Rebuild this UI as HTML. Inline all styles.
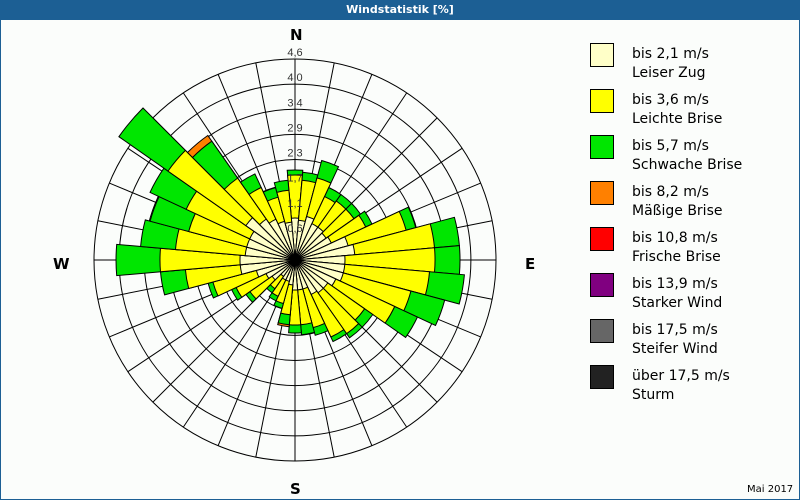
<!DOCTYPE html>
<html><head><meta charset="utf-8"><style>
html,body{margin:0;padding:0}
body{width:800px;height:500px;overflow:hidden;background:#fbfdfb;font-family:"DejaVu Sans","Liberation Sans",sans-serif;position:relative}
#frame{position:absolute;left:0;top:0;width:798px;height:498px;border:1px solid #1c5f94}
#title{position:absolute;left:0;top:0;width:800px;height:20px;background:#1c5f94;color:#fff;font-size:11px;font-weight:bold;text-align:center;line-height:20px}
.lg{position:absolute;left:590px;width:22px;height:22px;border:1px solid #000}
.lt{position:absolute;left:632px;font-size:14px;line-height:19px;color:#000}
.cmp{position:absolute;font-size:15px;font-weight:bold;color:#000}
</style></head><body>
<div id="frame"></div>
<div id="title">Windstatistik [%]</div>
<svg id="s" width="800" height="500" style="position:absolute;left:0;top:0"></svg>
<div class="cmp" style="left:290px;top:26px">N</div>
<div class="cmp" style="left:53px;top:255px">W</div>
<div class="cmp" style="left:525px;top:255px">E</div>
<div class="cmp" style="left:290px;top:480px">S</div>

<div class="lg" style="top:43px;background:#ffffc8"></div><div class="lt" style="top:45px">bis 2,1 m/s<br>Leiser Zug</div>
<div class="lg" style="top:89px;background:#ffff00"></div><div class="lt" style="top:91px">bis 3,6 m/s<br>Leichte Brise</div>
<div class="lg" style="top:135px;background:#00e600"></div><div class="lt" style="top:137px">bis 5,7 m/s<br>Schwache Brise</div>
<div class="lg" style="top:181px;background:#ff8000"></div><div class="lt" style="top:183px">bis 8,2 m/s<br>Mäßige Brise</div>
<div class="lg" style="top:227px;background:#ff0000"></div><div class="lt" style="top:229px">bis 10,8 m/s<br>Frische Brise</div>
<div class="lg" style="top:273px;background:#800080"></div><div class="lt" style="top:275px">bis 13,9 m/s<br>Starker Wind</div>
<div class="lg" style="top:319px;background:#666666"></div><div class="lt" style="top:321px">bis 17,5 m/s<br>Steifer Wind</div>
<div class="lg" style="top:365px;background:#222222"></div><div class="lt" style="top:367px">über 17,5 m/s<br>Sturm</div>
<div style="position:absolute;left:747px;top:484px;font-size:10px;color:#000">Mai 2017</div>
<script>
var cx=295,cy=260,R=201,s=document.getElementById('s'),h='';
var cols=['#ffffc8','#ffff00','#00e600','#ff8000'];
var d={0:[42,85,90],10:[40,80,88],20:[45,85,103],30:[40,70,80],40:[40,72,80],50:[38,72,80],60:[40,78,85],70:[55,115,125],80:[60,140,165],90:[50,140,165],100:[50,135,170],110:[50,120,155],120:[45,110,135],130:[40,85,95],140:[40,90,95],150:[38,85,90],160:[30,70,78],170:[30,65,75],180:[30,65,73],190:[25,55,65,67],200:[22,45,50],210:[22,40,45],220:[20,35,40],230:[28,55,60],240:[32,65,70],250:[40,85,90],260:[55,110,135],270:[55,135,179],280:[50,120,155],290:[50,110,150],300:[50,120,160],310:[60,155,215],320:[50,100,145,152],330:[45,80,95],340:[40,65,75],350:[38,70,80]};
function pt(a,r){var t=(a-90)*Math.PI/180;return (cx+r*Math.cos(t)).toFixed(1)+','+(cy+r*Math.sin(t)).toFixed(1);}
for(var i=1;i<=8;i++){h+='<circle cx="'+cx+'" cy="'+cy+'" r="'+(R*i/8).toFixed(1)+'" fill="none" stroke="#000" stroke-width="1"/>';}
for(var i=0;i<32;i++){var p=pt(i*11.25,R).split(',');h+='<line x1="'+cx+'" y1="'+cy+'" x2="'+p[0]+'" y2="'+p[1]+'" stroke="#000" stroke-width="1"/>';}
for(var a=0;a<360;a+=10){var v=d[a];for(var k=v.length-1;k>=0;k--){var r=v[k];
h+='<path d="M'+cx+','+cy+' L'+pt(a-5,r)+' A'+r+','+r+' 0 0 1 '+pt(a+5,r)+' Z" fill="'+cols[k]+'" stroke="#000" stroke-width="1"/>';}}
h+='<circle cx="'+cx+'" cy="'+cy+'" r="4" fill="#000"/>';
var lab=['0,6','1,1','1,7','2,3','2,9','3,4','4,0','4,6'];
for(var i=0;i<8;i++){var y=cy-R*(i+1)/8-3;h+='<text x="'+cx+'" y="'+y.toFixed(1)+'" font-size="11" text-anchor="middle" fill="#333" font-family="Liberation Sans,DejaVu Sans,sans-serif">'+lab[i]+'</text>';}
s.innerHTML=h;
</script>
</body></html>
